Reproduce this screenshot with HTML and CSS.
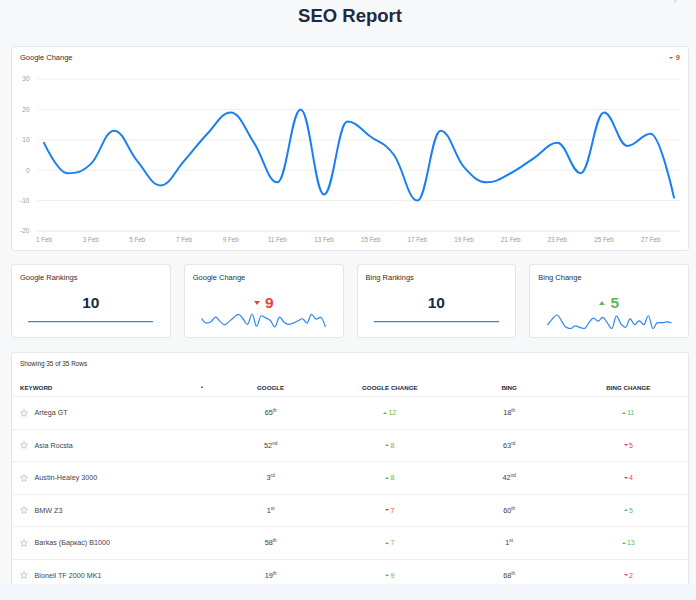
FILE: index.html
```html
<!DOCTYPE html>
<html lang="en">
<head>
<meta charset="utf-8">
<title>SEO Report</title>
<link rel="stylesheet" href="styles.css">
</head>
<body>
<div class="page">
  <div class="meta">Last 28 days</div>
  <h1 class="title">SEO Report</h1>

  <section class="card chart-card">
    <div class="card-head">
      <span class="card-title">Google Change</span>
      <span class="delta down"><i class="tri-down sm"></i>9</span>
    </div>
    <svg class="main-chart" width="676" height="184" viewBox="12 66 676 184">
      <g class="grid">
        <line x1="37" x2="680" y1="79" y2="79"/>
        <line x1="37" x2="680" y1="109.4" y2="109.4"/>
        <line x1="37" x2="680" y1="139.8" y2="139.8"/>
        <line x1="37" x2="680" y1="170.2" y2="170.2"/>
        <line x1="37" x2="680" y1="200.6" y2="200.6"/>
        <line class="axis" x1="37" x2="680" y1="231" y2="231"/>
      </g>
      <g class="ylab">
        <text x="29.5" y="81.3">30</text>
        <text x="29.5" y="111.7">20</text>
        <text x="29.5" y="142.1">10</text>
        <text x="29.5" y="172.5">0</text>
        <text x="29.5" y="202.9">-10</text>
        <text x="29.5" y="233.3">-20</text>
      </g>
      <g class="xlab">
        <text x="44" y="242.3">1 Feb</text>
        <text x="90.7" y="242.3">3 Feb</text>
        <text x="137.3" y="242.3">5 Feb</text>
        <text x="184" y="242.3">7 Feb</text>
        <text x="230.7" y="242.3">9 Feb</text>
        <text x="277.3" y="242.3">11 Feb</text>
        <text x="324" y="242.3">13 Feb</text>
        <text x="370.7" y="242.3">15 Feb</text>
        <text x="417.3" y="242.3">17 Feb</text>
        <text x="464" y="242.3">19 Feb</text>
        <text x="510.7" y="242.3">21 Feb</text>
        <text x="557.3" y="242.3">23 Feb</text>
        <text x="604" y="242.3">25 Feb</text>
        <text x="650.7" y="242.3">27 Feb</text>
      </g>
      <path class="line main-line" data-values="9,-1,2,13,3,-5,3,12,19,9,-4,20,-8,16,11,5,-10,13,1,-4,-1,4,9,-1,19,8,12,-9" data-left="44" data-right="674" data-top="79" data-bottom="231" data-min="-20" data-max="30" d=""/>
    </svg>
  </section>

  <section class="stats">
    <div class="card stat">
      <div class="card-title">Google Rankings</div>
      <div class="stat-value">10</div>
      <svg class="spark" width="125" height="16" viewBox="0 0 125 16"><path class="line thin" d="M0 8.7H125"/></svg>
    </div>
    <div class="card stat">
      <div class="card-title">Google Change</div>
      <div class="stat-value down"><i class="tri-down lg"></i>9</div>
      <svg class="spark" width="125" height="16" viewBox="0 0 125 16"><path class="line thin" data-values="9,-1,2,13,3,-5,3,12,19,9,-4,20,-8,16,11,5,-10,13,1,-4,-1,4,9,-1,19,8,12,-9" data-left="0.8" data-right="124.2" data-top="1" data-bottom="14" data-min="-10" data-max="20" d=""/></svg>
    </div>
    <div class="card stat">
      <div class="card-title">Bing Rankings</div>
      <div class="stat-value">10</div>
      <svg class="spark" width="125" height="16" viewBox="0 0 125 16"><path class="line thin" d="M0 8.7H125"/></svg>
    </div>
    <div class="card stat">
      <div class="card-title">Bing Change</div>
      <div class="stat-value up"><i class="tri-up lg"></i>5</div>
      <svg class="spark" width="125" height="16" viewBox="0 0 125 16"><path class="line thin" data-values="15,30,40,25,8,5,12,8,5,20,32,24,34,20,5,37,17,8,30,15,25,15,38,5,20,20,22,20" data-left="0.8" data-right="124.2" data-top="2" data-bottom="15.5" data-min="5" data-max="40" d=""/></svg>
    </div>
  </section>

  <section class="card table-card">
    <div class="table-meta">Showing 35 of 35 Rows</div>
    <div class="trow thead">
      <div class="c-key"><span>Keyword</span><i class="sort"></i></div>
      <div class="c-num">Google</div>
      <div class="c-num">Google Change</div>
      <div class="c-num">Bing</div>
      <div class="c-num">Bing Change</div>
    </div>

    <div class="trow">
      <div class="c-key"><svg class="star" width="8" height="8" viewBox="0 0 10 10"><polygon points="5,0.6 6.15,3.7 9.5,3.85 6.9,5.95 7.8,9.2 5,7.35 2.2,9.2 3.1,5.95 0.5,3.85 3.85,3.7"/></svg><span>Artega GT</span></div>
      <div class="c-num rank">65<sup>th</sup></div>
      <div class="chg up"><i class="tri-up xs"></i>12</div>
      <div class="c-num rank">18<sup>th</sup></div>
      <div class="chg up"><i class="tri-up xs"></i>11</div>
    </div>
    <div class="trow">
      <div class="c-key"><svg class="star" width="8" height="8" viewBox="0 0 10 10"><polygon points="5,0.6 6.15,3.7 9.5,3.85 6.9,5.95 7.8,9.2 5,7.35 2.2,9.2 3.1,5.95 0.5,3.85 3.85,3.7"/></svg><span>Asia Rocsta</span></div>
      <div class="c-num rank">52<sup>nd</sup></div>
      <div class="chg up"><i class="tri-up xs"></i>8</div>
      <div class="c-num rank">63<sup>rd</sup></div>
      <div class="chg down"><i class="tri-down xs"></i>5</div>
    </div>
    <div class="trow">
      <div class="c-key"><svg class="star" width="8" height="8" viewBox="0 0 10 10"><polygon points="5,0.6 6.15,3.7 9.5,3.85 6.9,5.95 7.8,9.2 5,7.35 2.2,9.2 3.1,5.95 0.5,3.85 3.85,3.7"/></svg><span>Austin-Healey 3000</span></div>
      <div class="c-num rank">3<sup>rd</sup></div>
      <div class="chg up"><i class="tri-up xs"></i>8</div>
      <div class="c-num rank">42<sup>nd</sup></div>
      <div class="chg down"><i class="tri-down xs"></i>4</div>
    </div>
    <div class="trow">
      <div class="c-key"><svg class="star" width="8" height="8" viewBox="0 0 10 10"><polygon points="5,0.6 6.15,3.7 9.5,3.85 6.9,5.95 7.8,9.2 5,7.35 2.2,9.2 3.1,5.95 0.5,3.85 3.85,3.7"/></svg><span>BMW Z3</span></div>
      <div class="c-num rank">1<sup>st</sup></div>
      <div class="chg down"><i class="tri-down xs"></i>7</div>
      <div class="c-num rank">60<sup>th</sup></div>
      <div class="chg up"><i class="tri-up xs"></i>5</div>
    </div>
    <div class="trow">
      <div class="c-key"><svg class="star" width="8" height="8" viewBox="0 0 10 10"><polygon points="5,0.6 6.15,3.7 9.5,3.85 6.9,5.95 7.8,9.2 5,7.35 2.2,9.2 3.1,5.95 0.5,3.85 3.85,3.7"/></svg><span>Barkas (Баркас) B1000</span></div>
      <div class="c-num rank">58<sup>th</sup></div>
      <div class="chg up"><i class="tri-up xs"></i>7</div>
      <div class="c-num rank">1<sup>st</sup></div>
      <div class="chg up"><i class="tri-up xs"></i>13</div>
    </div>
    <div class="trow">
      <div class="c-key"><svg class="star" width="8" height="8" viewBox="0 0 10 10"><polygon points="5,0.6 6.15,3.7 9.5,3.85 6.9,5.95 7.8,9.2 5,7.35 2.2,9.2 3.1,5.95 0.5,3.85 3.85,3.7"/></svg><span>Blonell TF 2000 MK1</span></div>
      <div class="c-num rank">19<sup>th</sup></div>
      <div class="chg up"><i class="tri-up xs"></i>9</div>
      <div class="c-num rank">68<sup>th</sup></div>
      <div class="chg down"><i class="tri-down xs"></i>2</div>
    </div>
  </section>
</div>
<script src="script.js"></script>
</body>
</html>
```

FILE: styles.css
```css
* { box-sizing: border-box; }
html, body { margin: 0; padding: 0; }
body {
  background: #f3f7fb;
  font-family: "Liberation Sans", Arial, Helvetica, sans-serif;
  color: #333;
}
.page {
  height: 584px;
  overflow: hidden;
  background: #f7f8fa;
  padding: 0 7px 0 11px;
}
.meta {
  height: 8px;
  margin-top: -6px;
  padding-right: 8px;
  text-align: right;
  font-size: 7px;
  line-height: 8px;
  color: #a7b0ba;
}
.title {
  margin: 3px 0 0;
  text-align: center;
  font-size: 18.5px;
  line-height: 22px;
  font-weight: bold;
  color: #1d2c41;
}
.card {
  background: #fff;
  border: 1px solid #e4e6e9;
  border-radius: 3px;
}
.card-title {
  font-size: 7.5px;
  line-height: 8px;
  color: #2c2f33;
}
.chart-card { margin-top: 19px; }
.card-head {
  display: flex;
  justify-content: space-between;
  align-items: center;
  padding: 7px 8px 4px;
  line-height: 8px;
}
.delta {
  display: flex;
  align-items: center;
  gap: 3px;
  font-size: 7.5px;
  font-weight: bold;
}
.down { color: #e5453f; }
.up { color: #5cb85c; }
.main-chart { display: block; }
.grid line { stroke: #efefef; stroke-width: 1; }
.grid line.axis { stroke: #e6e6e6; }
.ylab text {
  font-size: 6.5px;
  fill: #9b9b9b;
  text-anchor: end;
  font-family: "Liberation Sans", Arial, sans-serif;
}
.xlab text {
  font-size: 6.3px;
  fill: #9b9b9b;
  text-anchor: middle;
  font-family: "Liberation Sans", Arial, sans-serif;
}
.line {
  fill: none;
  stroke: #1a80f1;
  stroke-width: 2;
  stroke-linejoin: round;
  stroke-linecap: round;
}
.line.thin { stroke: #2a87f0; stroke-width: 1.2; }

/* triangles */
.tri-down, .tri-up {
  display: inline-block;
  flex: none;
  width: 0;
  height: 0;
  border-left: 2px solid transparent;
  border-right: 2px solid transparent;
}
.tri-down { border-top: 2.6px solid currentColor; }
.tri-up { border-bottom: 2.6px solid currentColor; }
.tri-down.sm { border-left-width: 2px; border-right-width: 2px; border-top-width: 2.6px; }
.tri-down.lg { border-left-width: 3.8px; border-right-width: 3.8px; border-top-width: 4.3px; }
.tri-up.lg { border-left-width: 3.8px; border-right-width: 3.8px; border-bottom-width: 4.3px; }
.tri-up.xs { border-left-width: 2px; border-right-width: 2px; border-bottom-width: 2.8px; }
.tri-down.xs { border-left-width: 2px; border-right-width: 2px; border-top-width: 2.8px; }

/* stat cards */
.stats {
  display: grid;
  grid-template-columns: repeat(4, 1fr);
  gap: 13px;
  margin-top: 13px;
}
.stat {
  height: 74px;
  padding: 9px 8px 0;
}
.stat-value {
  margin-top: 12px;
  display: flex;
  justify-content: center;
  align-items: center;
  gap: 5.5px;
  font-size: 15.5px;
  line-height: 18px;
  font-weight: bold;
  color: #1b2a3e;
}
.stat-value.down { color: #e5453f; }
.stat-value.up { color: #5cb85c; }
.spark {
  display: block;
  margin: 1px auto 0;
}

/* table */
.table-card { margin-top: 14px; }
.table-meta {
  padding: 7px 8px 0;
  font-size: 6.4px;
  line-height: 8px;
  color: #2c2f33;
}
.trow {
  display: grid;
  grid-template-columns: 199px repeat(4, 1fr);
  align-items: center;
  height: 32.5px;
  border-bottom: 1px solid #efefef;
  font-size: 7.2px;
  line-height: 9px;
  color: #454545;
}
.thead {
  height: 29px;
  padding-top: 12px;
  font-size: 6.2px;
  font-weight: bold;
  text-transform: uppercase;
  color: #1d2a44;
  line-height: 8px;
}
.c-key {
  display: flex;
  align-items: center;
  gap: 6.5px;
  padding-left: 8px;
}
.thead .c-key {
  justify-content: space-between;
  padding-right: 8px;
}
.sort {
  display: inline-block;
  width: 0;
  height: 0;
  border-left: 1.8px solid transparent;
  border-right: 1.8px solid transparent;
  border-bottom: 2.4px solid #1d2a44;
  margin-top: -3px;
}
.c-num { text-align: center; }
.rank { font-size: 7.3px; color: #3a3d42; }
.rank sup {
  font-size: 4.6px;
  line-height: 0;
  vertical-align: 3px;
}
.chg {
  display: flex;
  justify-content: center;
  align-items: center;
  gap: 1px;
  font-size: 7px;
  line-height: 9px;
}
.star polygon {
  fill: none;
  stroke: #b9b9b9;
  stroke-width: 0.9;
  stroke-linejoin: round;
}
```

FILE: script.js
```js
function fmt(n) { return (Math.round(n * 100) / 100).toString(); }

function splinePath(pts) {
  var s = 1.5, den = 2.5, d = '', lastRight = null;
  for (var i = 0; i < pts.length; i++) {
    var p = pts[i];
    if (i === 0) { d += 'M' + fmt(p.x) + ' ' + fmt(p.y); continue; }
    var last = pts[i - 1], next = pts[i + 1];
    var lcx = p.x, lcy = p.y, rc = null;
    if (next) {
      lcx = (s * p.x + last.x) / den;
      lcy = (s * p.y + last.y) / den;
      var rcx = (s * p.x + next.x) / den, rcy = (s * p.y + next.y) / den;
      if (rcx !== lcx) {
        var c = ((rcy - lcy) * (rcx - p.x)) / (rcx - lcx) + p.y - rcy;
        lcy += c; rcy += c;
      }
      if (lcy > last.y && lcy > p.y) { lcy = Math.max(last.y, p.y); rcy = 2 * p.y - lcy; }
      else if (lcy < last.y && lcy < p.y) { lcy = Math.min(last.y, p.y); rcy = 2 * p.y - lcy; }
      if (rcy > next.y && rcy > p.y) { rcy = Math.max(next.y, p.y); lcy = 2 * p.y - rcy; }
      else if (rcy < next.y && rcy < p.y) { rcy = Math.min(next.y, p.y); lcy = 2 * p.y - rcy; }
      rc = { x: rcx, y: rcy };
    }
    var a = lastRight || last;
    d += 'C' + [a.x, a.y, lcx, lcy, p.x, p.y].map(fmt).join(' ');
    lastRight = rc;
  }
  return d;
}

document.querySelectorAll('path[data-values]').forEach(function (el) {
  var v = el.getAttribute('data-values').split(',').map(Number);
  var l = +el.getAttribute('data-left'), r = +el.getAttribute('data-right');
  var t = +el.getAttribute('data-top'), b = +el.getAttribute('data-bottom');
  var mn = +el.getAttribute('data-min'), mx = +el.getAttribute('data-max');
  var pts = v.map(function (val, i) {
    return { x: l + i * (r - l) / (v.length - 1), y: b - (val - mn) / (mx - mn) * (b - t) };
  });
  el.setAttribute('d', splinePath(pts));
});
```
